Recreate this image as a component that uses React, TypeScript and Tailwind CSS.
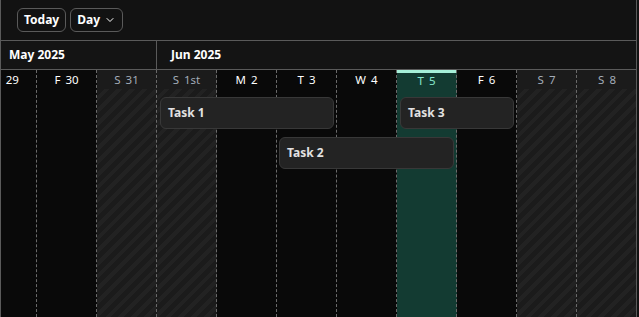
import { ChevronDown } from 'lucide-react';

type Day = { dow: string; num: string; weekend?: boolean; today?: boolean };

const DAYS: Day[] = [
  { dow: 'T', num: '29' },
  { dow: 'F', num: '30' },
  { dow: 'S', num: '31', weekend: true },
  { dow: 'S', num: '1st', weekend: true },
  { dow: 'M', num: '2' },
  { dow: 'T', num: '3' },
  { dow: 'W', num: '4' },
  { dow: 'T', num: '5', today: true },
  { dow: 'F', num: '6' },
  { dow: 'S', num: '7', weekend: true },
  { dow: 'S', num: '8', weekend: true },
];

const TASKS = [
  { name: 'Task 1', left: 183, width: 174, top: 8 },
  { name: 'Task 2', left: 302, width: 175, top: 48 },
  { name: 'Task 3', left: 423, width: 114, top: 8 },
];

const hatch =
  'bg-[#1b1b1b] bg-[image:repeating-linear-gradient(135deg,#1b1b1b_0px,#1b1b1b_5px,#222222_5px,#222222_9px)]';

export default function App() {
  return (
    <div className="w-[639px] h-[317px] overflow-hidden bg-[#121212] text-white font-['Segoe_UI','Noto_Sans','Open_Sans',sans-serif]">
      <div className="w-[637px] h-full flex flex-col border-x border-[#5a5a5a]">
        {/* Toolbar */}
        <div className="h-[40px] shrink-0 flex items-center gap-[4px] pl-[16px] bg-[#121212]">
          <button className="h-[24px] px-[6px] rounded-[6px] border border-[#5a5a5a] text-[12px] font-bold leading-none">
            Today
          </button>
          <button className="h-[24px] pl-[6px] pr-[6px] rounded-[6px] border border-[#5a5a5a] text-[12px] font-bold leading-none flex items-center gap-[4px]">
            Day
            <ChevronDown size={12} strokeWidth={2} />
          </button>
        </div>

        {/* Timeline */}
        <div className="flex-1 overflow-hidden border-t border-[#5a5a5a]">
          <div className="ml-[-24px] w-[660px] h-full flex flex-col">
            {/* Month row */}
            <div className="h-[29px] shrink-0 flex bg-[#141414] border-b border-[#5a5a5a] text-[12px] font-bold">
              <div className="w-[180px] shrink-0 border-r border-[#5a5a5a] flex items-center pl-[32px]">May 2025</div>
              <div className="flex-1 flex items-center pl-[14px]">Jun 2025</div>
            </div>

            {/* Day columns */}
            <div className="relative flex-1 flex">
              {DAYS.map((d, i) => (
                <div
                  key={i}
                  className={`w-[60px] shrink-0 flex flex-col border-dashed border-[#6a6a6a] ${
                    i < DAYS.length - 1 ? 'border-r' : ''
                  } ${d.today ? 'bg-[#133b32]' : d.weekend ? 'bg-[#1b1b1b]' : 'bg-[#090909]'}`}
                >
                  <div
                    className={`h-[19px] shrink-0 flex items-center justify-center gap-[5px] pt-[1px] text-[11.5px] ${
                      d.today
                        ? 'border-t-[3px] border-[#a6f0d9] text-[#86e6cc] pb-[1px]'
                        : d.weekend
                          ? 'text-[#a3acb8]'
                          : 'text-white'
                    }`}
                  >
                    <span>{d.dow}</span>
                    <span>{d.num}</span>
                  </div>
                  <div className={`flex-1 ${d.weekend ? hatch : ''}`} />
                </div>
              ))}

              {TASKS.map((t) => (
                <div
                  key={t.name}
                  className="absolute h-[32px] flex items-center pl-[7px] rounded-[6px] bg-[#232323] border border-[#383838] text-[12px] font-bold text-[#e2e2e2]"
                  style={{ left: t.left, width: t.width, top: 19 + t.top }}
                >
                  {t.name}
                </div>
              ))}
            </div>
          </div>
        </div>
      </div>
    </div>
  );
}
